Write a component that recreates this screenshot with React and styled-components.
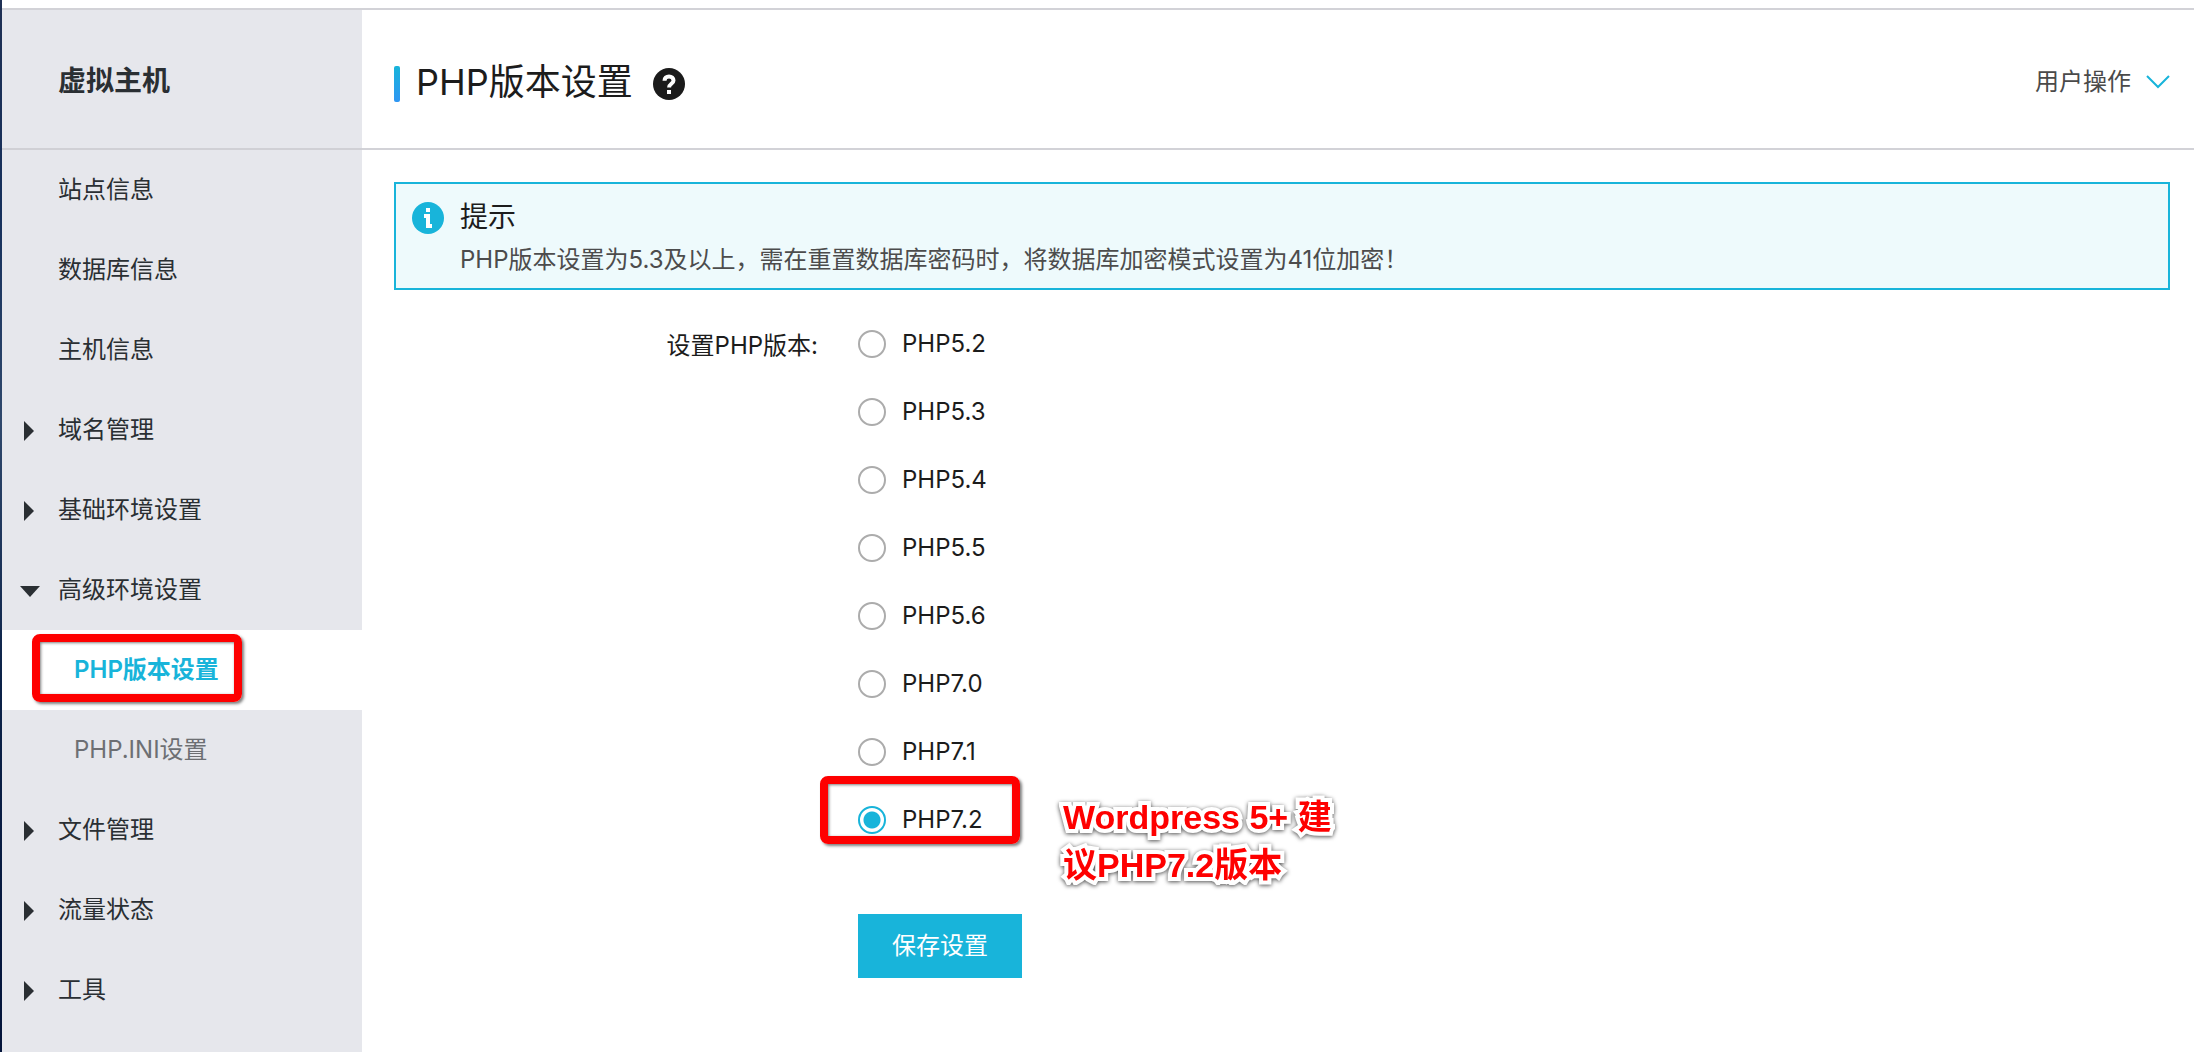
import React from 'react';
import styled, { createGlobalStyle } from 'styled-components';

const versions = ['5.2', '5.3', '5.4', '5.5', '5.6', '7.0', '7.1', '7.2'];

const menu = [
    { text: '站点信息' },
    { text: '数据库信息' },
    { text: '主机信息' },
    { text: '域名管理', arrow: 'right' },
    { text: '基础环境设置', arrow: 'right' },
    { text: '高级环境设置', arrow: 'down', children: [
        { text: 'PHP版本设置', active: true },
        { text: 'PHP.INI设置' }
    ] },
    { text: '文件管理', arrow: 'right' },
    { text: '流量状态', arrow: 'right' },
    { text: '工具', arrow: 'right' }
];

class Sidebar extends React.Component{
    renderArrow(arrow){
        if(!arrow) return null;
        return (
            <svg width="20" height="20" viewBox="0 0 20 20" fill="currentColor" aria-hidden="true">
                <path d={arrow === 'down' ? 'M0 5h20L10 16z' : 'M4 0v20l10-10z'} />
            </svg>
        )
    }
    render(){
        return (
            <Side>
                <SideTitle>虚拟主机</SideTitle>
                <List>
                    {menu.map(m => (
                        <li key={m.text}>
                            <Item href="#">
                                <Arrow>{this.renderArrow(m.arrow)}</Arrow>
                                {m.text}
                            </Item>
                            {m.children && (
                                <List>
                                    {m.children.map(c => (
                                        <li key={c.text}>
                                            <SubItem href="#" $active={c.active}>
                                                {c.text}
                                                {c.active && <SideMark />}
                                            </SubItem>
                                        </li>
                                    ))}
                                </List>
                            )}
                        </li>
                    ))}
                </List>
            </Side>
        )
    }
}

class App extends React.Component{
    constructor(props){
        super(props);
        this.state = {
            version: '7.2'
        }
    }
    renderVersion(v){
        return (
            <Option key={v}>
                <Radio
                    type="radio"
                    name="version"
                    value={v}
                    checked={this.state.version === v}
                    onChange={() => this.setState({version: v})}
                />
                PHP{v}
                {v === '7.2' && <OptionMark />}
                {v === '7.2' && <Note>Wordpress 5+ 建<br />议PHP7.2版本</Note>}
            </Option>
        )
    }
    render(){
        return (
            <Page>
                <GlobalStyle />
                <Sidebar />
                <Main>
                    <Header>
                        <TitleBar />
                        <Title>PHP版本设置</Title>
                        <Help aria-label="帮助">
                            <svg width="32" height="32" viewBox="0 0 32 32" aria-hidden="true">
                                <circle cx="16" cy="16" r="16" fill="#1b1b1b" />
                                <path d="M11.5 12.800c0-2.800 1.900-4.300 4.500-4.300s4.500 1.500 4.500 3.900c0 3.400-4.400 3.300-4.400 7" fill="none" stroke="#fff" strokeWidth="4" />
                                <rect x="14" y="22" width="4" height="4" fill="#fff" />
                            </svg>
                        </Help>
                        <UserMenu>
                            用户操作
                            <svg width="24" height="14" viewBox="0 0 24 14" aria-hidden="true">
                                <path d="M1 1l11 11L23 1" fill="none" stroke="#18b4da" strokeWidth="2" />
                            </svg>
                        </UserMenu>
                    </Header>
                    <Content>
                        <Tip>
                            <svg width="32" height="32" viewBox="0 0 32 32" aria-hidden="true">
                                <circle cx="16" cy="16" r="16" fill="#18b4da" />
                                <path d="M14 6h4v4h-4zM12 12h6v10h2v4h-6V16h-2z" fill="#fff" />
                            </svg>
                            <div>
                                <TipTitle>提示</TipTitle>
                                <TipText>PHP版本设置为5.3及以上，需在重置数据库密码时，将数据库加密模式设置为41位加密！</TipText>
                            </div>
                        </Tip>
                        <Form onSubmit={e => e.preventDefault()}>
                            <FormLabel id="version-label">设置PHP版本:</FormLabel>
                            <div role="radiogroup" aria-labelledby="version-label">
                                {versions.map(v => this.renderVersion(v))}
                                <Save type="submit">保存设置</Save>
                            </div>
                        </Form>
                    </Content>
                </Main>
            </Page>
        )
    }
}
export default App;

const GlobalStyle = createGlobalStyle`
    * {
        box-sizing: border-box;
    }
    body {
        margin: 0;
        background-color: #fff;
        color: #1c1c1c;
        font-family: Inter, "Noto Sans CJK SC", sans-serif;
        font-size: 24px;
        line-height: 36px;
    }
`
const Page = styled.div`
    display: flex;
    min-height: 100vh;
    padding-top: 8px;
    border-left: 2px solid #1c3460;
    border-image: linear-gradient(#1f3054, #16305c 20%, #2f486c 40%, #0c2248 65%, #04143a) 0 0 0 2;
`
const Side = styled.nav`
    flex: 0 0 360px;
    border-top: 2px solid #d2d2d7;
    background-color: #e6e7ec;
    color: #2a2f33;
`
const SideTitle = styled.h2`
    height: 140px;
    margin: 0;
    padding: 0 56px;
    border-bottom: 2px solid #d0d0d5;
    font-size: 28px;
    line-height: 142px;
`
const List = styled.ul`
    margin: 0;
    padding: 0;
    list-style: none;
`
const Item = styled.a`
    display: flex;
    align-items: center;
    height: 80px;
    color: inherit;
    text-decoration: none;
`
const Arrow = styled.span`
    display: flex;
    width: 56px;
    padding: 2px 0 0 18px;
`
const SubItem = styled(Item)`
    position: relative;
    padding-left: 72px;
    background-color: ${props => props.$active ? '#fff' : 'transparent'};
    color: ${props => props.$active ? '#18b4da' : '#6d6f73'};
    font-weight: ${props => props.$active ? 600 : 400};
`
/* red hand-drawn frames over the page */
const Mark = styled.span`
    position: absolute;
    border: 8px solid #fe0000;
    border-radius: 8px;
    box-shadow: 2px 2px 3px rgba(0, 0, 0, .5), inset 1px 1px 3px rgba(0, 0, 0, .5);
    pointer-events: none;
`
const SideMark = styled(Mark)`
    top: 4px;
    left: 30px;
    width: 210px;
    height: 68px;
`
const OptionMark = styled(Mark)`
    top: -20px;
    left: -38px;
    width: 200px;
    height: 68px;
`
const Note = styled.strong`
    position: absolute;
    top: -3px;
    left: 205px;
    color: #fe0000;
    font: bold 34px/48px "Liberation Sans", "Noto Sans CJK SC", sans-serif;
    white-space: nowrap;
    -webkit-text-stroke: 8px #fff;
    paint-order: stroke fill;
    filter: drop-shadow(0 1px 2px rgba(0, 0, 0, .7));
`
const Main = styled.main`
    flex: 1;
    min-width: 0;
`
const Header = styled.header`
    display: flex;
    align-items: center;
    height: 142px;
    padding: 6px 24px 0 32px;
    border-top: 2px solid #d2d2d7;
    border-bottom: 2px solid #d2d2d7;
`
const TitleBar = styled.span`
    width: 6px;
    height: 36px;
    margin-top: 4px;
    border-radius: 2px;
    background: linear-gradient(#18b4da, #2f96f3);
`
const Title = styled.h1`
    margin: 0 20px 0 16px;
    font-size: 36px;
    font-weight: 400;
    line-height: 48px;
`
const Help = styled.button`
    display: flex;
    margin-top: 4px;
    padding: 0;
    border: 0;
    background: none;
`
const UserMenu = styled.button`
    display: flex;
    align-items: center;
    gap: 15px;
    margin-left: auto;
    padding: 0;
    border: 0;
    background: none;
    color: #4a4a4a;
    font: inherit;
`
const Content = styled.div`
    padding: 32px 24px 32px 32px;
`
const Tip = styled.section`
    display: flex;
    align-items: flex-start;
    gap: 16px;
    padding: 14px 16px 10px;
    border: 2px solid #18b4da;
    background-color: #eefafc;
    svg {
        flex: none;
        margin-top: 4px;
    }
`
const TipTitle = styled.h3`
    margin: 0;
    font-size: 28px;
    font-weight: 400;
    line-height: 38px;
`
const TipText = styled.p`
    margin: 6px 0 0;
    color: #4c4c4c;
`
const Form = styled.form`
    display: grid;
    grid-template-columns: 424px 1fr;
    column-gap: 40px;
    padding-top: 30px;
`
const FormLabel = styled.span`
    line-height: 52px;
    text-align: right;
`
const Option = styled.label`
    position: relative;
    display: flex;
    align-items: center;
    gap: 16px;
    width: 160px;
    height: 48px;
    margin-bottom: 20px;
`
const Radio = styled.input`
    appearance: none;
    width: 28px;
    height: 28px;
    margin: 0;
    border: 2px solid #acacac;
    border-radius: 50%;
    &:checked {
        border-color: #18b4da;
        background: radial-gradient(circle, #18b4da 8px, #fff 9px);
    }
`
const Save = styled.button`
    height: 64px;
    margin-top: 50px;
    padding: 0 34px;
    border: 0;
    background-color: #18b4da;
    color: #fff;
    font: inherit;
`
